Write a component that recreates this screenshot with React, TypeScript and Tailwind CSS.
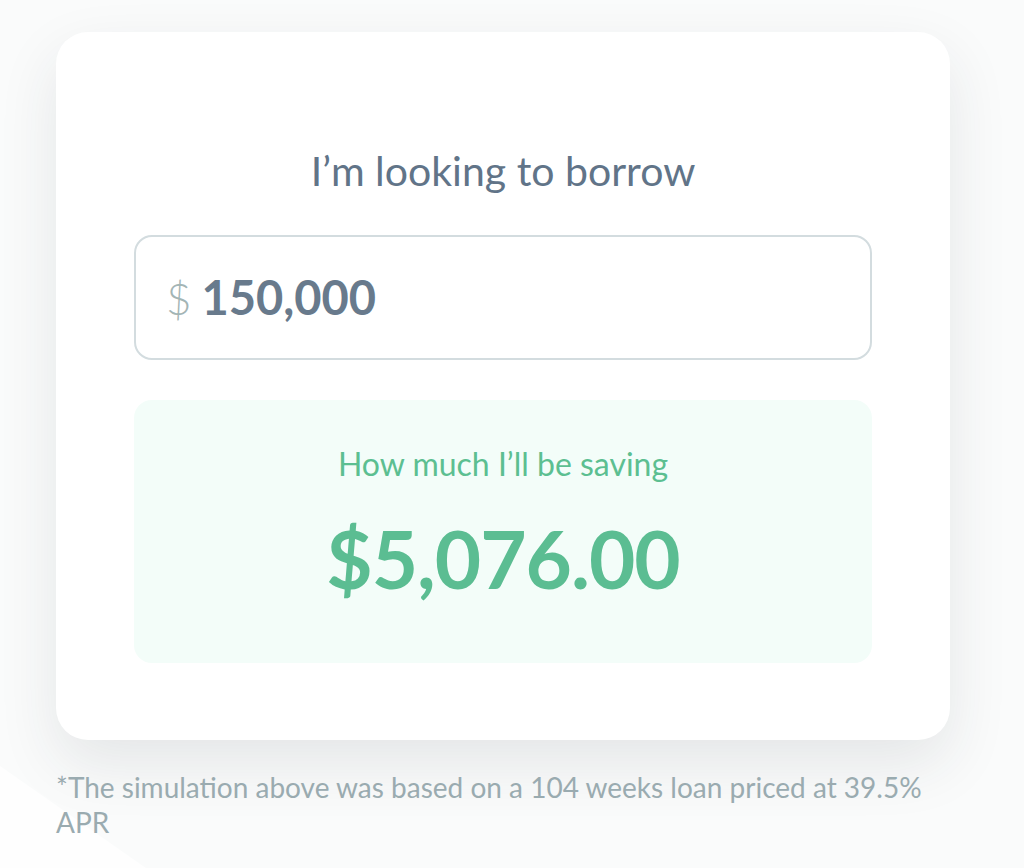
import React from "react";

const FONT = { fontFamily: "Lato, 'Noto Sans', 'Liberation Sans', sans-serif" };

export default function App() {
  return (
    <div
      className="relative min-h-[868px] w-[1024px] overflow-hidden bg-[#fafbfb]"
      style={FONT}
    >
      {/* faint diagonal sheen bottom-left */}
      <div className="pointer-events-none absolute -left-[120px] top-[820px] h-[300px] w-[300px] rotate-[35deg] bg-white/80" />

      <div className="relative pl-[56px] pt-[32px]">
        <div className="flex w-[894px] flex-col items-center rounded-[32px] bg-white px-[78px] pb-[77px] pt-[116px] shadow-[0_24px_60px_rgba(40,50,60,0.10)]">
          <h1 className="text-[41px] leading-[46px] font-normal text-[#617488]">
            I’m looking to borrow
          </h1>

          <div className="mt-[41px] flex h-[125px] w-full items-center rounded-[18px] border-2 border-[#d3dcdf] px-[30px]">
            <span className="mr-[10px] text-[44px] leading-none font-light text-[#a3b5b5]">$</span>
            <span className="text-[47px] leading-none font-bold text-[#687a8c]">150,000</span>
          </div>

          <div className="mt-[40px] flex h-[263px] w-full flex-col items-center rounded-[18px] bg-[#f3fdf9] pt-[44px]">
            <p className="text-[32px] leading-[40px] text-[#5cbf91]">How much I’ll be saving</p>
            <p className="mt-[30px] text-[80px] leading-[88px] font-bold tracking-[-1px] text-[#5bbd92]">
              $5,076.00
            </p>
          </div>
        </div>

        <p className="mt-[30px] w-[890px] text-[28px] leading-[35px] text-[#9aabb0]">
          *The simulation above was based on a 104 weeks loan priced at 39.5% APR
        </p>
      </div>
    </div>
  );
}
